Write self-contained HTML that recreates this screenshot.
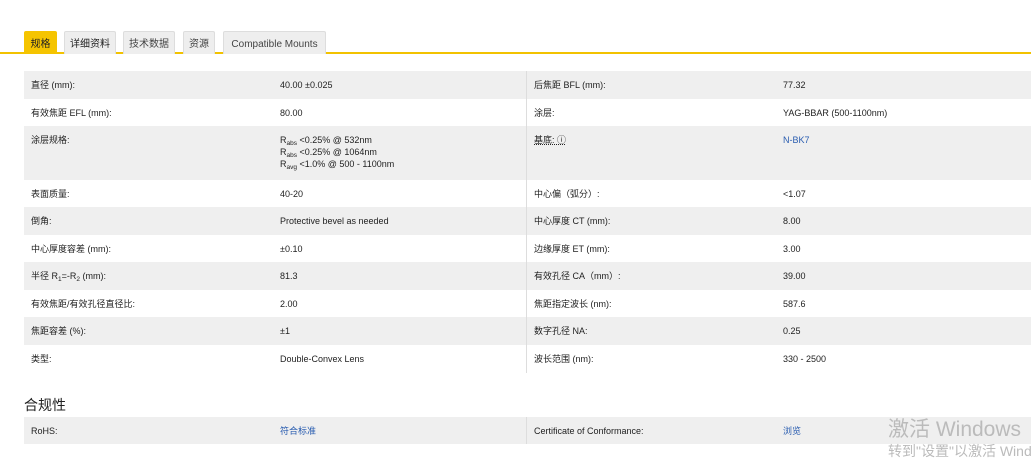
<!DOCTYPE html>
<html><head><meta charset="utf-8"><style>
body{margin:0;background:#fff;font-family:"Liberation Sans","Noto Sans CJK SC",sans-serif;color:#222;width:1031px;height:467px;overflow:hidden;position:relative}
.tab{position:absolute;top:31px;height:23px;background:#eee;border:1px solid #ddd;border-bottom:none;font-size:10px;line-height:25px;text-align:center;color:#444;box-sizing:border-box;border-radius:2px 2px 0 0}
.line{position:absolute;left:0;top:52px;width:1031px;height:2px;background:#f2c200}
.row{position:absolute;left:24px;width:1007px;font-size:9px}
.g{background:#efefef}
.row span{position:absolute;top:8px;line-height:12px;white-space:nowrap}
.a{left:7px}.b{left:256px}.c{left:510px}.d{left:759px}
.div{position:absolute;left:526px;top:71px;width:1px;height:302px;background:#ddd}
a{color:#2a5db0;text-decoration:none}
sub{font-size:6.5px;line-height:0;vertical-align:-2px}
</style></head><body>
<div class="line"></div>
<div class="tab" style="left:24px;width:33px;background:#f5c400;border-color:#f5c400;color:#222">规格</div>
<div class="tab" style="left:64px;width:52px;color:#222">详细资料</div>
<div class="tab" style="left:123px;width:52px">技术数据</div>
<div class="tab" style="left:183px;width:32px">资源</div>
<div class="tab" style="left:223px;width:103px">Compatible Mounts</div>

<div class="row g" style="top:71px;height:28px"><span class="a">直径 (mm):</span><span class="b">40.00 ±0.025</span><span class="c">后焦距 BFL (mm):</span><span class="d">77.32</span></div>
<div class="row" style="top:99px;height:27px"><span class="a">有效焦距 EFL (mm):</span><span class="b">80.00</span><span class="c">涂层:</span><span class="d">YAG-BBAR (500-1100nm)</span></div>
<div class="row g" style="top:126px;height:54px"><span class="a">涂层规格:</span><span class="b" style="top:8px;line-height:12px">R<sub>abs</sub> &lt;0.25% @ 532nm<br>R<sub>abs</sub> &lt;0.25% @ 1064nm<br>R<sub>avg</sub> &lt;1.0% @ 500 - 1100nm</span><span class="c"><u style="text-decoration:underline dotted">基底: ⓘ</u></span><span class="d"><a>N-BK7</a></span></div>
<div class="row" style="top:180px;height:27px"><span class="a">表面质量:</span><span class="b">40-20</span><span class="c">中心偏（弧分）:</span><span class="d">&lt;1.07</span></div>
<div class="row g" style="top:207px;height:28px"><span class="a">倒角:</span><span class="b">Protective bevel as needed</span><span class="c">中心厚度 CT (mm):</span><span class="d">8.00</span></div>
<div class="row" style="top:235px;height:27px"><span class="a">中心厚度容差 (mm):</span><span class="b">±0.10</span><span class="c">边缘厚度 ET (mm):</span><span class="d">3.00</span></div>
<div class="row g" style="top:262px;height:28px"><span class="a">半径 R<sub>1</sub>=-R<sub>2</sub> (mm):</span><span class="b">81.3</span><span class="c">有效孔径 CA（mm）:</span><span class="d">39.00</span></div>
<div class="row" style="top:290px;height:27px"><span class="a">有效焦距/有效孔径直径比:</span><span class="b">2.00</span><span class="c">焦距指定波长 (nm):</span><span class="d">587.6</span></div>
<div class="row g" style="top:317px;height:28px"><span class="a">焦距容差 (%):</span><span class="b">±1</span><span class="c">数字孔径 NA:</span><span class="d">0.25</span></div>
<div class="row" style="top:345px;height:28px"><span class="a">类型:</span><span class="b">Double-Convex Lens</span><span class="c">波长范围 (nm):</span><span class="d">330 - 2500</span></div>
<div class="div"></div>

<div style="position:absolute;left:24px;top:395px;font-size:14px">合规性</div>
<div class="row g" style="top:417px;height:27px"><span class="a">RoHS:</span><span class="b"><a>符合标准</a></span><span class="c">Certificate of Conformance:</span><span class="d"><a>浏览</a></span></div>
<div style="position:absolute;left:526px;top:417px;width:1px;height:27px;background:#ddd"></div>
<div style="position:absolute;left:888px;top:413px;font-size:21px;color:#bbb;white-space:nowrap">激活 Windows</div>
<div style="position:absolute;left:888px;top:441px;font-size:14px;color:#bbb;white-space:nowrap">转到"设置"以激活 Windows。</div>
</body></html>
